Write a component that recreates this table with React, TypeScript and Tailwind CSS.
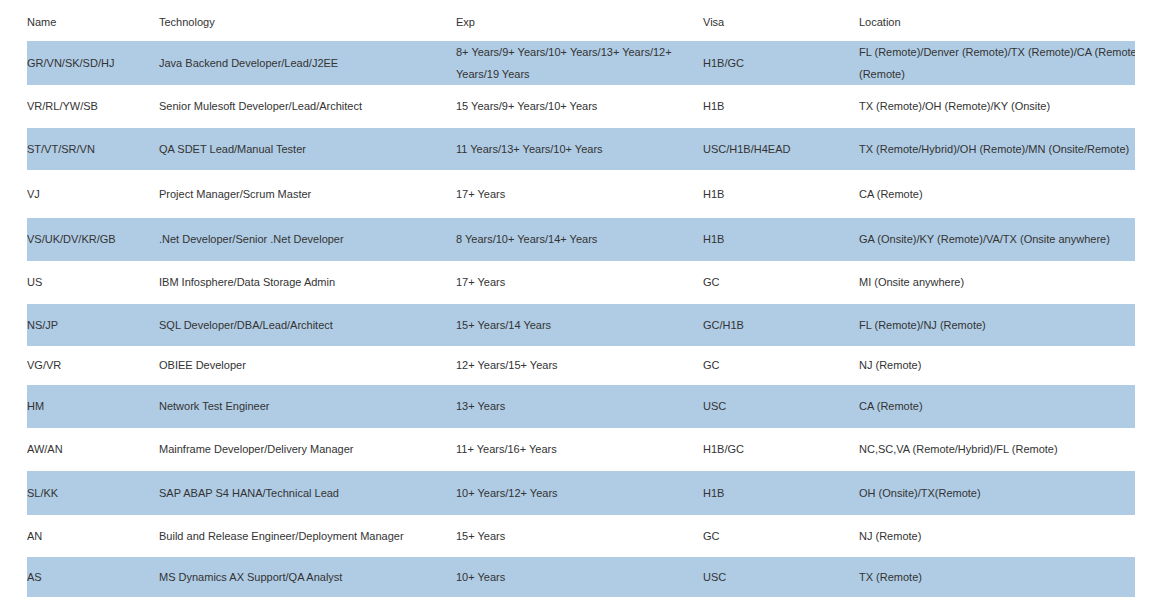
import React from "react";

type Row = { name: string; tech: string; exp: React.ReactNode; visa: string; loc: React.ReactNode; h: string };

const ROWS: Row[] = [
  {
    name: "GR/VN/SK/SD/HJ",
    tech: "Java Backend Developer/Lead/J2EE",
    exp: (
      <>
        8+ Years/9+ Years/10+ Years/13+ Years/12+
        <br />
        Years/19 Years
      </>
    ),
    visa: "H1B/GC",
    loc: (
      <>
        FL (Remote)/Denver (Remote)/TX (Remote)/CA (Remote)
        <br />
        (Remote)
      </>
    ),
    h: "h-[44px]",
  },
  { name: "VR/RL/YW/SB", tech: "Senior Mulesoft Developer/Lead/Architect", exp: "15 Years/9+ Years/10+ Years", visa: "H1B", loc: "TX (Remote)/OH (Remote)/KY (Onsite)", h: "h-[43px]" },
  { name: "ST/VT/SR/VN", tech: "QA SDET Lead/Manual Tester", exp: "11 Years/13+ Years/10+ Years", visa: "USC/H1B/H4EAD", loc: "TX (Remote/Hybrid)/OH (Remote)/MN (Onsite/Remote)", h: "h-[42px]" },
  { name: "VJ", tech: "Project Manager/Scrum Master", exp: "17+ Years", visa: "H1B", loc: "CA (Remote)", h: "h-[48px]" },
  { name: "VS/UK/DV/KR/GB", tech: ".Net Developer/Senior .Net Developer", exp: "8 Years/10+ Years/14+ Years", visa: "H1B", loc: "GA (Onsite)/KY (Remote)/VA/TX (Onsite anywhere)", h: "h-[43px]" },
  { name: "US", tech: "IBM Infosphere/Data Storage Admin", exp: "17+ Years", visa: "GC", loc: "MI (Onsite anywhere)", h: "h-[43px]" },
  { name: "NS/JP", tech: "SQL Developer/DBA/Lead/Architect", exp: "15+ Years/14 Years", visa: "GC/H1B", loc: "FL (Remote)/NJ (Remote)", h: "h-[42px]" },
  { name: "VG/VR", tech: "OBIEE Developer", exp: "12+ Years/15+ Years", visa: "GC", loc: "NJ (Remote)", h: "h-[39px]" },
  { name: "HM", tech: "Network Test Engineer", exp: "13+ Years", visa: "USC", loc: "CA (Remote)", h: "h-[43px]" },
  { name: "AW/AN", tech: "Mainframe Developer/Delivery Manager", exp: "11+ Years/16+ Years", visa: "H1B/GC", loc: "NC,SC,VA (Remote/Hybrid)/FL (Remote)", h: "h-[43px]" },
  { name: "SL/KK", tech: "SAP ABAP S4 HANA/Technical Lead", exp: "10+ Years/12+ Years", visa: "H1B", loc: "OH (Onsite)/TX(Remote)", h: "h-[44px]" },
  { name: "AN", tech: "Build and Release Engineer/Deployment Manager", exp: "15+ Years", visa: "GC", loc: "NJ (Remote)", h: "h-[42px]" },
  { name: "AS", tech: "MS Dynamics AX Support/QA Analyst", exp: "10+ Years", visa: "USC", loc: "TX (Remote)", h: "h-[40px]" },
];

export default function App() {
  return (
    <div className="min-h-[599px] bg-white pl-[27px] font-['Liberation_Sans',Arial,sans-serif] text-[11px] text-[#333]">
      <div className="w-[1108px] overflow-hidden">
        <table className="w-[1140px] table-fixed border-collapse">
          <colgroup>
            <col className="w-[132px]" />
            <col className="w-[297px]" />
            <col className="w-[247px]" />
            <col className="w-[156px]" />
            <col className="w-[308px]" />
          </colgroup>
          <thead>
            <tr className="h-[41px] text-left">
              <th className="p-0 pt-[4px] font-normal">Name</th>
              <th className="p-0 pt-[4px] font-normal">Technology</th>
              <th className="p-0 pt-[4px] font-normal">Exp</th>
              <th className="p-0 pt-[4px] font-normal">Visa</th>
              <th className="p-0 pt-[4px] font-normal">Location</th>
            </tr>
          </thead>
          <tbody>
            {ROWS.map((r, i) => {
              const cell = i === 0 ? "whitespace-nowrap p-0" : "whitespace-nowrap p-0 pb-px";
              return (
                <tr key={r.name + i} className={`${r.h} ${i % 2 === 0 ? "bg-[#b0cce4]" : "bg-white"} leading-[22px]`}>
                  <td className={cell}>{r.name}</td>
                  <td className={cell}>{r.tech}</td>
                  <td className={cell}>{r.exp}</td>
                  <td className={cell}>{r.visa}</td>
                  <td className={cell}>{r.loc}</td>
                </tr>
              );
            })}
          </tbody>
        </table>
      </div>
    </div>
  );
}
